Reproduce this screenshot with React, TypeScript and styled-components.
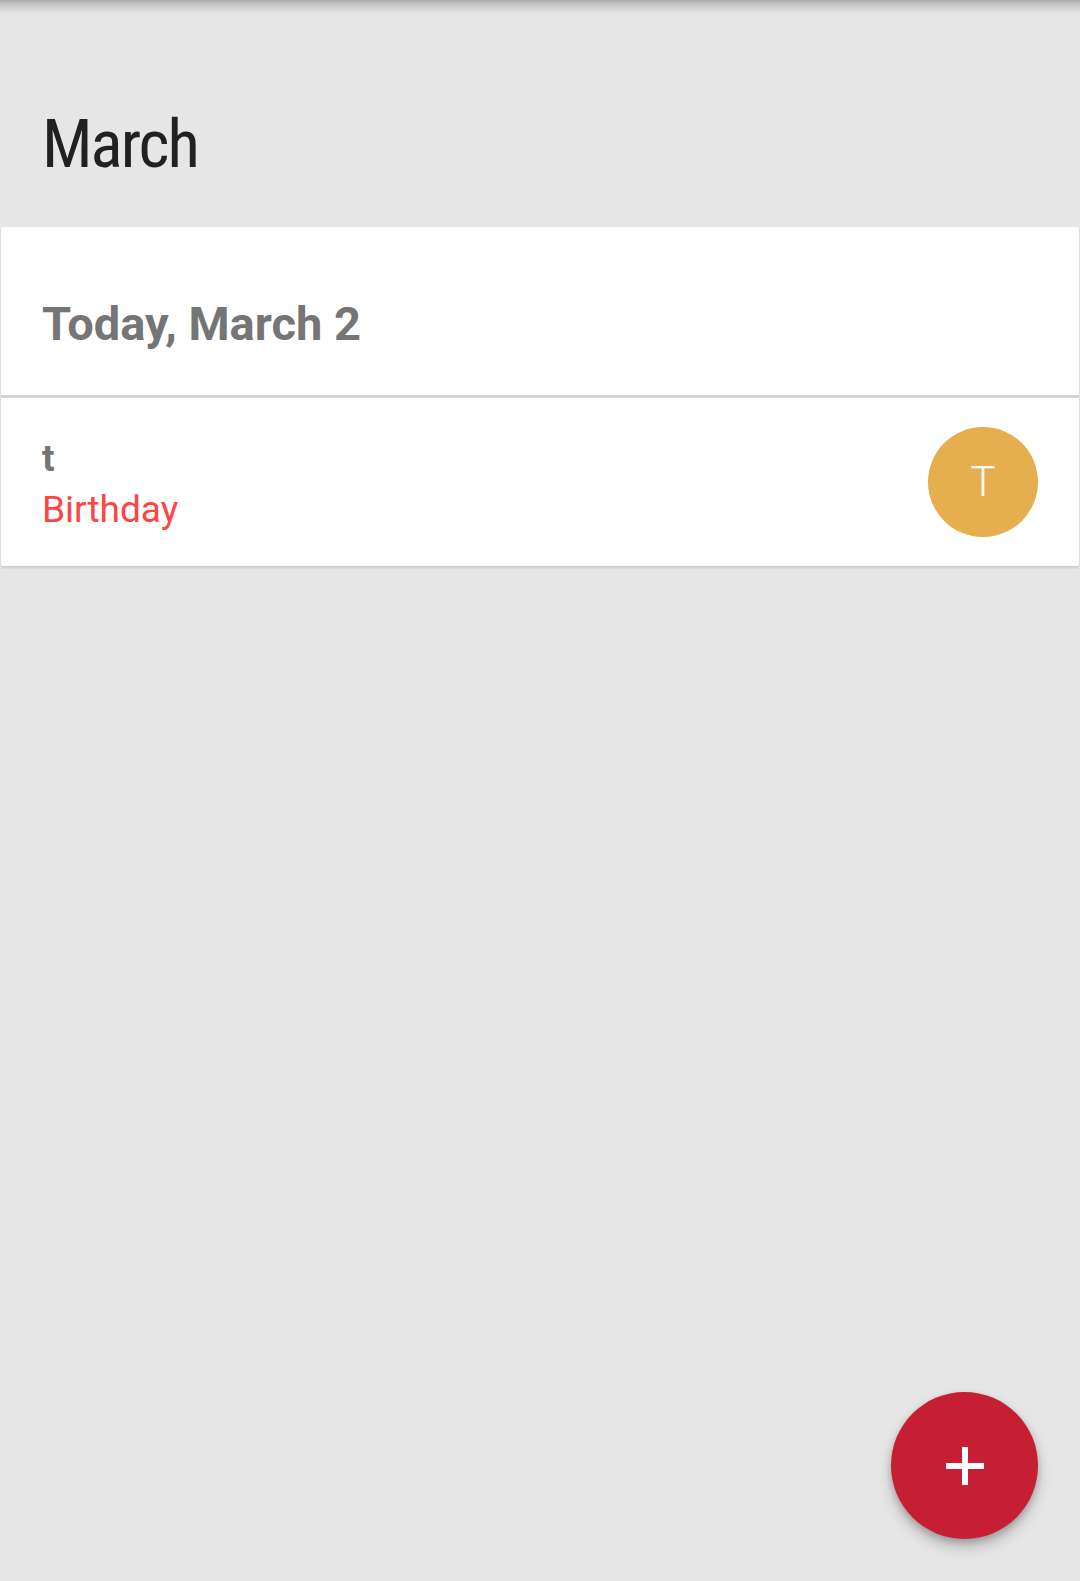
import React from "react";
import styled, { createGlobalStyle } from "styled-components";

const GlobalStyle = createGlobalStyle`
  html, body {
    margin: 0;
    padding: 0;
    background: #e6e6e6;
    font-family: Roboto, "Noto Sans", "Liberation Sans", sans-serif;
  }
  * { box-sizing: border-box; }
`;

const Page = styled.div`
  position: relative;
  min-height: 1581px;
  display: flex;
  flex-direction: column;
  background: #e6e6e6;
  overflow: hidden;
`;

const TopShadow = styled.div`
  height: 14px;
  background: linear-gradient(
    to bottom,
    rgba(0, 0, 0, 0.26) 0%,
    rgba(0, 0, 0, 0.12) 40%,
    rgba(0, 0, 0, 0) 100%
  );
`;

const MonthTitle = styled.h1`
  margin: 97px 0 49px 0;
  padding: 0 42px;
  font-family: Roboto, "Liberation Sans", sans-serif;
  font-weight: 400;
  font-size: 67px;
  line-height: 67px;
  font-stretch: 75%;
  letter-spacing: -2px;
  color: #212121;
`;

const Card = styled.div`
  margin: 0 1px;
  background: #ffffff;
  border-radius: 2px;
  box-shadow: 0 3px 1px rgba(0, 0, 0, 0.05), 0 1px 2px rgba(0, 0, 0, 0.08);
  display: flex;
  flex-direction: column;
`;

const DayHeader = styled.div`
  padding: 73px 41px 47px 41px;
  font-weight: 700;
  font-size: 47px;
  line-height: 48px;
  color: #757575;
  border-bottom: 3px solid #d6d6d6;
`;

const EventRow = styled.div`
  height: 168px;
  padding: 0 41px 0 41px;
  display: flex;
  align-items: center;
  justify-content: space-between;
`;

const EventText = styled.div`
  display: flex;
  flex-direction: column;
  margin-top: 4px;
`;

const EventTitle = styled.div`
  font-weight: 700;
  font-size: 37px;
  line-height: 51px;
  color: #757575;
`;

const EventKind = styled.div<{ $color: string }>`
  font-weight: 400;
  font-size: 37px;
  line-height: 51px;
  color: ${(p) => p.$color};
`;

const Avatar = styled.div<{ $bg: string }>`
  width: 110px;
  height: 110px;
  margin-top: 0;
  border-radius: 50%;
  background: ${(p) => p.$bg};
  color: #ffffff;
  display: flex;
  align-items: center;
  justify-content: center;
  font-weight: 300;
  font-size: 42px;
  line-height: 1;
`;

const Fab = styled.button`
  position: absolute;
  right: 42px;
  bottom: 42px;
  width: 147px;
  height: 147px;
  border-radius: 50%;
  border: none;
  padding: 0;
  background: #c61f33;
  box-shadow: 0 8px 14px rgba(0, 0, 0, 0.22), 0 3px 6px rgba(0, 0, 0, 0.16);
  display: flex;
  align-items: center;
  justify-content: center;
  cursor: pointer;
`;

export default function App() {
  return (
    <>
      <GlobalStyle />
      <Page>
        <TopShadow />
        <MonthTitle>March</MonthTitle>
        <Card>
          <DayHeader>Today, March 2</DayHeader>
          <EventRow>
            <EventText>
              <EventTitle>t</EventTitle>
              <EventKind $color="#ff4444">Birthday</EventKind>
            </EventText>
            <Avatar $bg="#e5af4f">T</Avatar>
          </EventRow>
        </Card>
        <Fab aria-label="Add">
          <svg width="38" height="38" viewBox="0 0 38 38">
            <rect x="16" y="0" width="6" height="38" fill="#ffffff" />
            <rect x="0" y="16" width="38" height="6" fill="#ffffff" />
          </svg>
        </Fab>
      </Page>
    </>
  );
}
